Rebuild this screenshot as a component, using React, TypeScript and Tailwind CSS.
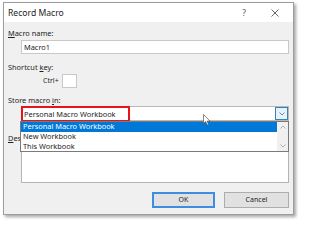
import React from "react";

const font = { fontFamily: '"Segoe UI", "Noto Sans", "Open Sans", sans-serif' };

export default function App() {
  return (
    <div className="w-[300px] h-[221px] bg-white relative overflow-hidden" style={font}>
      <div className="absolute left-[3px] top-[2px] w-[291px] h-[213px] border border-[#9d9d9d] bg-[#f0f0f0] shadow-[2px_2px_3px_rgba(0,0,0,0.35)] flex flex-col text-[7.4px] text-[#1e1e1e] leading-[10px]">
        {/* title bar */}
        <div className="h-[19px] bg-white flex items-center pl-[4px] pr-[10px] text-[8.6px] text-[#222]">
          <span className="flex-1">Record Macro</span>
          <span className="mr-[25px] text-[8.6px] text-[#555]">?</span>
          <svg width="8" height="8" viewBox="0 0 8 8" className="mr-[4px]">
            <path d="M0.5 0.5 L7.5 7.5 M7.5 0.5 L0.5 7.5" stroke="#555" strokeWidth="0.9" />
          </svg>
        </div>
        {/* body */}
        <div className="flex flex-col pl-[4px] pr-[4px]">
          <div className="mt-[6px] h-[10px]">
            <span className="underline underline-offset-1">M</span>acro name:
          </div>
          <div className="ml-[13px] mt-[2px] h-[14px] bg-white border border-[#c9c9c9] flex items-center pl-[2px]">
            Macro1
          </div>
          <div className="mt-[8px] h-[10px]">
            Shortcut <span className="underline underline-offset-1">k</span>ey:
          </div>
          <div className="mt-[2px] flex items-center ml-[35px]">
            <span className="mr-[3px] text-[7px]">Ctrl+</span>
            <div className="w-[15px] h-[14px] bg-white border border-[#c9c9c9]" />
          </div>
          <div className="mt-[7px] h-[10px]">
            Store macro <span className="underline underline-offset-1">i</span>n:
          </div>
          <div className="ml-[13px] mt-[1px] h-[15px] bg-white border border-[#b9b9b9] flex items-stretch relative">
            <div className="flex-1 flex items-center pl-[2px]">Personal Macro Workbook</div>
            <div className="w-[13px] bg-[#e5f1fb] border border-[#3c7fb1] flex items-center justify-center">
              <svg width="6" height="4" viewBox="0 0 6 4">
                <path d="M0.5 0.5 L3 3 L5.5 0.5" stroke="#5a6d80" strokeWidth="0.8" fill="none" />
              </svg>
            </div>
            <div className="absolute left-[-1px] top-[-1px] w-[109px] h-[16px] border-2 border-[#e8141b]" />
          </div>
          <div className="mt-[12px] h-[10px]">
            <span className="underline underline-offset-1">D</span>escription:
          </div>
          <div className="ml-[13px] mt-[-3px] h-[43px] bg-white border border-[#b4b4b4]" />
          <div className="flex justify-end gap-[9px] mt-[9px]">
            <div className="w-[63px] h-[16px] bg-[#e1e1e1] border-2 border-[#3d8ee0] flex items-center justify-center text-[7px]">
              OK
            </div>
            <div className="w-[65px] h-[16px] bg-[#e1e1e1] border border-[#adadad] flex items-center justify-center text-[7px]">
              Cancel
            </div>
          </div>
        </div>
      </div>
      {/* dropdown list */}
      <div className="absolute left-[20px] top-[121px] w-[269px] h-[31px] bg-white border border-[#7a7a7a] flex text-[7.4px] leading-[9.5px] text-[#1e1e1e]" style={font}>
        <div className="flex-1 flex flex-col">
          <div className="bg-[#0078d7] text-white pl-[2px] h-[10px]">Personal Macro Workbook</div>
          <div className="pl-[2px] h-[9.5px]">New Workbook</div>
          <div className="pl-[2px] h-[9.5px]">This Workbook</div>
        </div>
        <div className="w-[11px] bg-[#f0f0f0] flex flex-col items-center justify-between py-[3px]">
          <svg width="6" height="4" viewBox="0 0 6 4">
            <path d="M0.5 3.5 L3 1 L5.5 3.5" stroke="#a0a0a0" strokeWidth="0.8" fill="none" />
          </svg>
          <svg width="6" height="4" viewBox="0 0 6 4">
            <path d="M0.5 0.5 L3 3 L5.5 0.5" stroke="#a0a0a0" strokeWidth="0.8" fill="none" />
          </svg>
        </div>
      </div>
      {/* cursor */}
      <svg className="absolute left-[203px] top-[114px]" width="8" height="12" viewBox="0 0 8 12">
        <path d="M0.5 0.5 L0.5 9.5 L2.6 7.6 L4.2 11 L5.6 10.4 L4.1 7.1 L7 7.1 Z" fill="white" stroke="#555" strokeWidth="0.7" />
      </svg>
    </div>
  );
}
